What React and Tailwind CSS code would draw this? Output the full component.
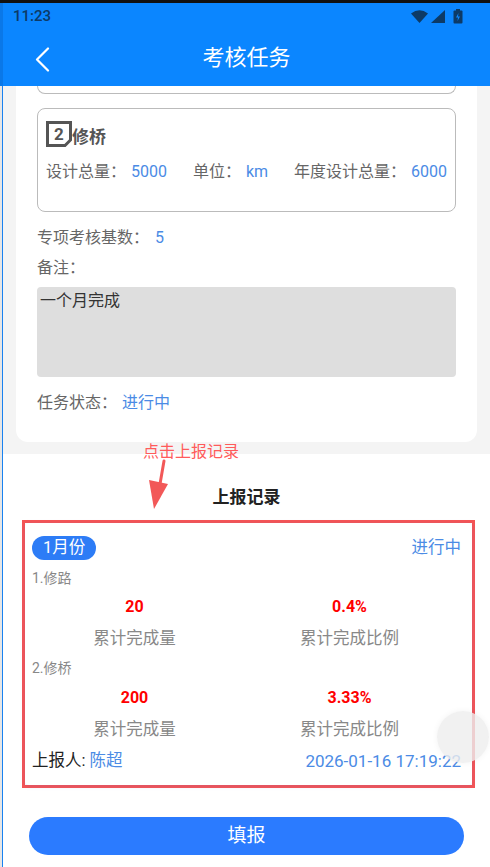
import React from 'react';

const font = { fontFamily: 'Roboto, "Noto Sans CJK SC", sans-serif' };

const StatusIcons = () => (
  <div className="flex items-center gap-[3px] pr-[27px]">
    <svg width="17" height="13" viewBox="0 0 17 13">
      <path d="M0 3.5 Q8.5 -3 17 3.5 L8.5 13 Z" fill="#0d3a66" />
    </svg>
    <svg width="14" height="13" viewBox="0 0 14 13">
      <path d="M14 0 V13 H0 Z" fill="#0d3a66" />
    </svg>
    <svg width="10" height="15" viewBox="0 0 10 15" className="ml-[5px]">
      <rect x="3" y="0" width="4" height="2" fill="#0d3a66" />
      <rect x="0.5" y="1.5" width="9" height="13" rx="1" fill="#0d3a66" />
      <path d="M5.5 4 L3 8.5 H5 L4.5 12 L7 7.5 H5 Z" fill="#0b86ff" />
    </svg>
  </div>
);

const NumIcon = ({ n }) => (
  <div className="relative w-[26px] h-[26px]">
    <svg width="26" height="26" viewBox="0 0 26 26" className="absolute left-0 top-0">
      <path d="M1.5 1.5 H24.5 V19 L19 24.5 H1.5 Z" fill="none" stroke="#555" strokeWidth="3" />
    </svg>
    <span className="absolute inset-0 flex items-center justify-center text-[17px] font-bold text-[#555] leading-none">
      {n}
    </span>
  </div>
);

const Field = ({ label, value }) => (
  <div className="flex items-center">
    <span className="text-[#666]">{label}：</span>
    <span className="ml-[5px] text-[#4b8be5]">{value}</span>
  </div>
);

const Stat = ({ value, label }) => (
  <div className="flex flex-col items-center">
    <div className="text-[16px] leading-[24px] font-bold text-[#ff0000]">{value}</div>
    <div className="mt-[8px] text-[16.5px] leading-[24px] text-[#888]">{label}</div>
  </div>
);

const App = () => {
  return (
    <div className="relative w-[490px] h-[867px] overflow-hidden bg-white flex flex-col" style={font}>
      <div className="h-[3px] bg-[#111] shrink-0" />
      <div className="flex flex-1 min-h-0">
        {/* left edge of the window behind */}
        <div className="w-[3px] flex flex-col shrink-0">
          <div className="h-[83px] bg-[#0a78e8]" />
          <div className="flex-1 bg-[#e6e6e6] border-r border-[#1a82f0]" />
        </div>

        <div className="flex-1 flex flex-col">
          {/* header */}
          <div className="bg-[#0b86ff] h-[83px] shrink-0">
            <div className="h-[27px] flex items-center justify-between pl-[10px]">
              <span className="text-[15px] font-medium text-[#0d3a66]">11:23</span>
              <StatusIcons />
            </div>
            <div className="h-[56px] grid grid-cols-[1fr_auto_1fr] items-center">
              <div className="pl-[32px] pt-[2px]">
                <svg width="15" height="25" viewBox="0 0 15 25">
                  <path d="M13 1.5 L2 12.5 L13 23.5" fill="none" stroke="white" strokeWidth="2.2" strokeLinecap="round" strokeLinejoin="round" />
                </svg>
              </div>
              <div className="text-white text-[22px] leading-none">考核任务</div>
              <div />
            </div>
          </div>

          {/* task card */}
          <div className="bg-[#f4f4f4] px-[13px] pb-[12px]">
            <div className="bg-white rounded-b-[12px] px-[21px] pb-[27px] text-[16px] leading-[24px]">
              <div className="h-[8px] border-x border-b border-[#bbb] rounded-b-[8px]" />
              <div className="mt-[14px] h-[104px] border border-[#bbb] rounded-[8px] pt-[12px] px-[8px]">
                <div className="flex items-center h-[26px]">
                  <NumIcon n="2" />
                  <span className="mt-[6px] text-[17px] font-bold text-[#555] leading-[20px]">修桥</span>
                </div>
                <div className="mt-[13px] flex justify-between">
                  <Field label="设计总量" value="5000" />
                  <Field label="单位" value="km" />
                  <Field label="年度设计总量" value="6000" />
                </div>
              </div>
              <div className="mt-[14px] flex">
                <span className="text-[#666]">专项考核基数：</span>
                <span className="ml-[6px] text-[#4b8be5]">5</span>
              </div>
              <div className="mt-[6px] text-[#666]">备注：</div>
              <div className="mt-[7px] h-[90px] bg-[#dedede] rounded-[4px] pl-[3px] pt-[2px] text-[#333]">
                一个月完成
              </div>
              <div className="mt-[14px] flex">
                <span className="text-[#666]">任务状态：</span>
                <span className="ml-[5px] text-[#4b8be5]">进行中</span>
              </div>
            </div>
          </div>

          {/* records */}
          <div className="flex-1 bg-white">
            <div className="pt-[31px] text-center text-[17px] leading-[24px] font-bold text-[#222]">上报记录</div>
            <div className="mt-[11px] ml-[19px] mr-[15px] border-[3px] border-[#f55454]">
              <div className="bg-white rounded-[4px] shadow-[0_1px_5px_rgba(70,100,220,0.18)] pt-[13px] pb-[12px] pl-[7px] pr-[11px]">
                <div className="flex items-center justify-between">
                  <span className="h-[24px] px-[11px] rounded-full bg-[#2d7cf6] text-white text-[16.5px] leading-[24px]">1月份</span>
                  <span className="text-[16.5px] text-[#4b8be5]">进行中</span>
                </div>
                <div className="mt-[7px] text-[14px] leading-[20px] text-[#888]">1.修路</div>
                <div className="mt-[7px] -ml-[5px] mr-[4px] grid grid-cols-2">
                  <Stat value="20" label="累计完成量" />
                  <Stat value="0.4%" label="累计完成比例" />
                </div>
                <div className="mt-[7px] text-[14px] leading-[20px] text-[#888]">2.修桥</div>
                <div className="mt-[8px] -ml-[5px] mr-[4px] grid grid-cols-2">
                  <Stat value="200" label="累计完成量" />
                  <Stat value="3.33%" label="累计完成比例" />
                </div>
                <div className="mt-[7px] flex justify-between text-[16.5px] leading-[24px]">
                  <div>
                    <span className="text-[#222]">上报人: </span>
                    <span className="text-[#4b8be5]">陈超</span>
                  </div>
                  <span className="text-[17px] text-[#4b8be5]">2026-01-16 17:19:22</span>
                </div>
              </div>
            </div>
            <div className="mt-[29px] mx-[26px] h-[38px] rounded-full bg-[#2b7bff] flex items-center justify-center text-white text-[19px]">
              填报
            </div>
          </div>
        </div>
      </div>

      {/* annotation overlay */}
      <div className="absolute left-[143px] top-[443px] text-[16px] leading-[18px] text-[#ff5b5b]">点击上报记录</div>
      <svg className="absolute left-[140px] top-[458px]" width="35" height="55" viewBox="0 0 35 55">
        <path d="M24 3 L20 26" stroke="#f25858" strokeWidth="3" strokeLinecap="round" />
        <path d="M9 22 L28 26 L14 51 Z" fill="#f25858" />
      </svg>

      {/* floating ball */}
      <div className="absolute left-[437px] top-[711px] w-[52px] h-[52px] rounded-full bg-[#eeeeee]/80 shadow-[0_0_6px_rgba(0,0,0,0.05)]" />
    </div>
  );
};

export default App;
